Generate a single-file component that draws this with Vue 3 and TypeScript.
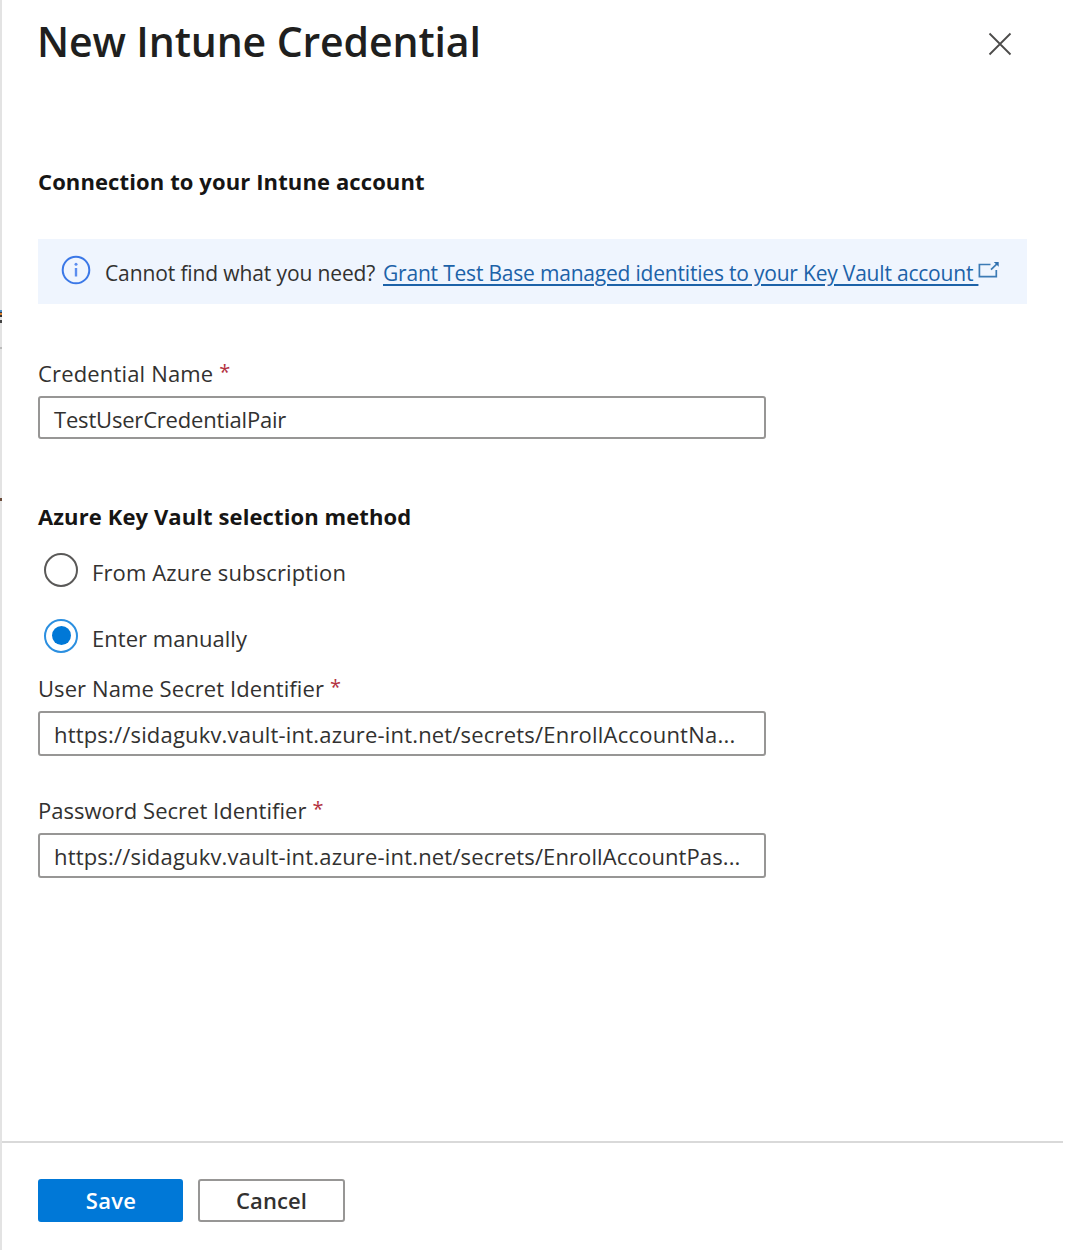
<script setup lang="ts">
import { ref } from 'vue'

type Method = 'subscription' | 'manual'

const method = ref<Method>('manual')
const options: { id: Method; label: string }[] = [
  { id: 'subscription', label: 'From Azure subscription' },
  { id: 'manual', label: 'Enter manually' },
]
</script>

<template>
  <div class="panel">
    <i class="edge edge-a"></i>
    <i class="edge edge-b"></i>
    <i class="edge edge-c"></i>
    <i class="edge edge-d"></i>

    <header class="head">
      <h1>New Intune Credential</h1>
      <button class="close" aria-label="Close">
        <svg width="24" height="24" viewBox="0 0 24 24" fill="none" stroke="#4c4b4a" stroke-width="1.8">
          <path d="M1.5 1.5 22.5 22.5M22.5 1.5 1.5 22.5" />
        </svg>
      </button>
    </header>

    <main class="body">
      <h2>Connection to your Intune account</h2>

      <div class="banner">
        <svg class="info" width="30" height="30" viewBox="0 0 30 30" fill="none">
          <circle cx="15" cy="15" r="13.3" stroke="#3b78e7" stroke-width="2" />
          <path d="M15 13v8.5" stroke="#5b8def" stroke-width="2.4" />
          <circle cx="15" cy="9.3" r="1.5" fill="#5b8def" />
        </svg>
        <span class="question">Cannot find what you need?</span>
        <a class="link">Grant Test Base managed identities to your Key Vault account&nbsp;</a>
        <svg class="external" width="22" height="18" viewBox="0 0 22 18" fill="none" stroke="#3c7bb5" stroke-width="1.7">
          <path d="M12.5 3.5H1.4v12.2h16.9V9" />
          <path d="M13 8.6 19.2 2.6" />
          <path d="M15.8 1.1h4.9v4.7z" fill="#2f6fae" stroke="none" />
        </svg>
      </div>

      <div class="field name">
        <label class="l-name">Credential Name<b>*</b></label>
        <div class="input"><span class="v-name">TestUserCredentialPair</span></div>
      </div>

      <h2 class="method">Azure Key Vault selection method</h2>
      <div class="radios">
        <div v-for="o in options" :key="o.id" class="radio" :class="{ on: method === o.id }" @click="method = o.id">
          <span class="ring"></span>
          <span class="text" :class="o.id">{{ o.label }}</span>
        </div>
      </div>

      <div class="field user">
        <label class="l-user">User Name Secret Identifier<b>*</b></label>
        <div class="input tall">
          <span class="v-url">https://sidagukv.vault-int.azure-int.net/secrets</span><span class="v-user">/EnrollAccountNa...</span>
        </div>
      </div>

      <div class="field pass">
        <label class="l-pass">Password Secret Identifier<b>*</b></label>
        <div class="input tall">
          <span class="v-url">https://sidagukv.vault-int.azure-int.net/secrets</span><span class="v-pass">/EnrollAccountPas...</span>
        </div>
      </div>
    </main>

    <footer class="foot">
      <button class="btn primary">Save</button>
      <button class="btn">Cancel</button>
    </footer>
  </div>
</template>

<style>
body {
  background: #fff;
}
</style>

<style scoped>
.panel {
  position: relative;
  box-sizing: border-box;
  width: 1065px;
  height: 1250px;
  border-left: 2px solid #e3e3e3;
  background: #fff;
  color: #323130;
  font-family: "Open Sans", "Noto Sans", sans-serif;
  font-size: 22px;
  line-height: 30px;
  display: flex;
  flex-direction: column;
  white-space: nowrap;
}
/* Slivers of the page that shows past the panel's left edge */
.edge {
  position: absolute;
  left: -2px;
  width: 2px;
}
.edge-a { top: 310px; height: 7px; background: linear-gradient(#4a8ac0 0 2px, #3a3a48 2px 3px, #d9812f 3px 5px, #333 5px 7px); }
.edge-b { top: 320px; height: 3px; background: #444; }
.edge-c { top: 347px; height: 2px; background: #bbb; }
.edge-d { top: 498px; height: 3px; background: #6b4c3a; }

.head {
  height: 171px;
  flex: none;
  display: flex;
  justify-content: space-between;
  align-items: flex-start;
  padding: 0 53px 0 35px;
  box-sizing: border-box;
}
h1 {
  margin: 13px 0 0;
  font-size: 41px;
  line-height: 56px;
  font-weight: 600;
  color: #201f1e;
  letter-spacing: -0.12px;
}
.close {
  margin: 32px 0 0;
  padding: 0;
  border: 0;
  background: none;
  width: 24px;
  height: 24px;
}
.close svg { display: block; }
.body {
  flex: 1;
  padding-left: 36px;
  margin-top: -5px;
}
h2 {
  margin: 0;
  font-size: 22px;
  line-height: 30px;
  font-weight: 700;
  color: #161514;
  letter-spacing: 0.11px;
}
.banner {
  margin-top: 43px;
  width: 989px;
  height: 65px;
  box-sizing: border-box;
  padding-left: 23px;
  background: #eff5fe;
  display: flex;
  font-size: 21px;
}
.info { margin-top: 16px; flex: none; }
.question { margin: 19px 0 0 14px; width: 278px; letter-spacing: -0.12px; }
.link {
  margin-top: 19px;
  width: 596px;
  overflow: hidden;
  color: #1c62a8;
  letter-spacing: -0.2px;
  text-decoration: underline;
  text-decoration-thickness: 2px;
  text-underline-offset: 3px;
}
.external { margin: 22px 0 0 -1px; flex: none; }

.field label {
  display: flex;
  height: 30px;
}
.field b {
  font-weight: 400;
  color: #b3323f;
  margin-left: 6px;
  font-size: 20px;
  letter-spacing: 0;
  line-height: 28px;
}
.input {
  box-sizing: border-box;
  width: 728px;
  height: 43px;
  margin-top: 8px;
  padding: 6px 0 0 14px;
  border: 2px solid #979695;
  border-radius: 3px;
  background: #fff;
  display: flex;
}
.input.tall { height: 45px; }
.name { margin-top: 54px; }
.user { margin-top: 20px; }
.pass { margin-top: 39px; }
.l-name { letter-spacing: 0.16px; }
.l-user { letter-spacing: 0.08px; }
.l-pass { letter-spacing: 0.02px; }
.v-name { letter-spacing: -0.19px; }
.v-url { letter-spacing: 0.18px; }
.v-user { letter-spacing: 0.22px; }
.v-pass { letter-spacing: 0.1px; }

.method {
  margin-top: 62px;
  letter-spacing: 0.1px;
}
.radios {
  margin-top: 22px;
  padding-left: 6px;
}
.radio {
  display: flex;
  height: 34px;
}
.radio + .radio { margin-top: 32px; }
.ring {
  box-sizing: border-box;
  width: 34px;
  height: 34px;
  border: 2px solid #5a5958;
  border-radius: 50%;
  display: flex;
  align-items: center;
  justify-content: center;
}
.on .ring { border-color: #2b8fe0; }
.on .ring::after {
  content: "";
  width: 19px;
  height: 19px;
  margin: -1px 0 0 1px;
  border-radius: 50%;
  background: #0078d7;
}
.text { margin: 4px 0 0 14px; }
.text.subscription { letter-spacing: 0.13px; }
.text.manual { letter-spacing: 0.03px; }

.foot {
  flex: none;
  box-sizing: border-box;
  height: 109px;
  width: 1061px;
  border-top: 2px solid #d9d9d9;
  padding: 36px 0 0 36px;
  display: flex;
  gap: 15px;
}
.btn {
  box-sizing: border-box;
  width: 147px;
  height: 43px;
  padding: 0;
  border: 2px solid #979695;
  border-radius: 3px;
  background: #fff;
  color: #323130;
  font: 600 22px/39px "Open Sans", "Noto Sans", sans-serif;
  letter-spacing: 0.1px;
}
.btn.primary {
  width: 145px;
  border-color: #0078d7;
  background: #0078d7;
  color: #fff;
  padding-left: 1px;
  letter-spacing: 0.3px;
}
</style>
